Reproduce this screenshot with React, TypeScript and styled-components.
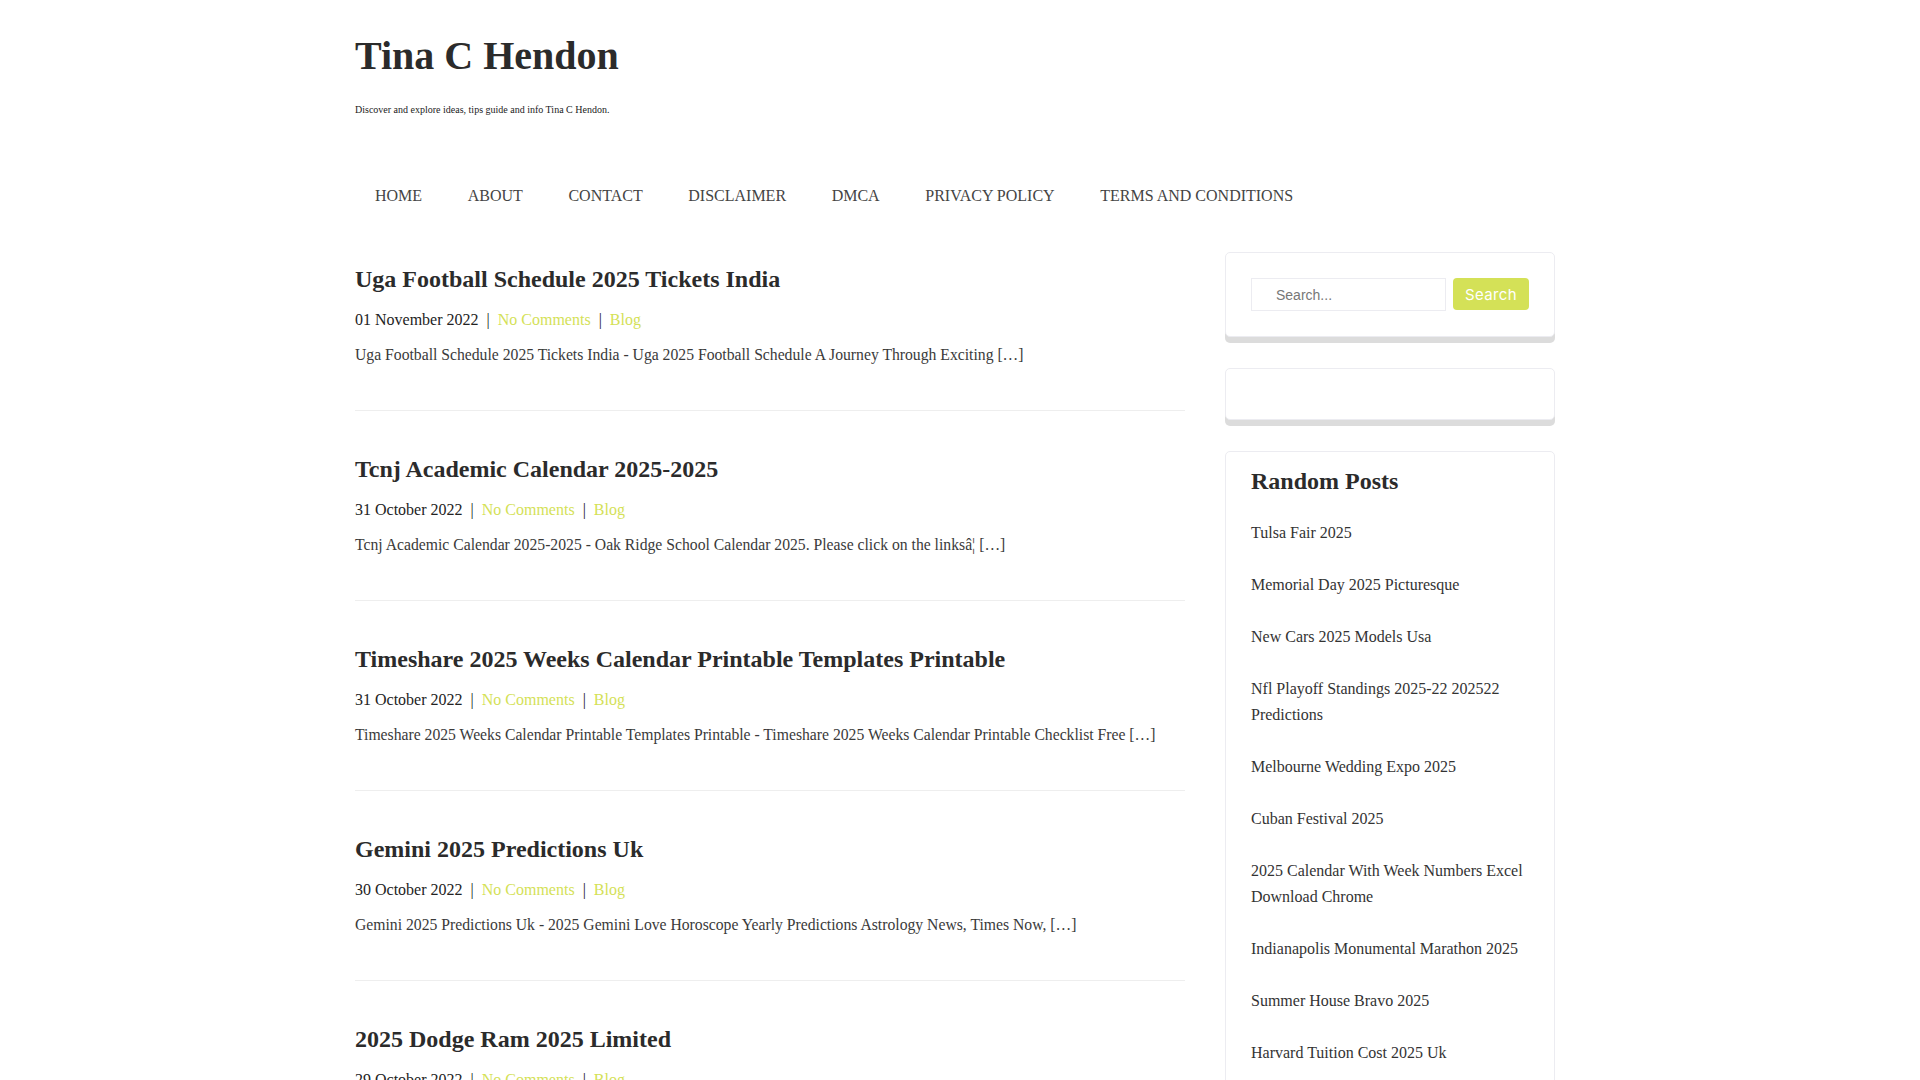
import styled, { createGlobalStyle } from "styled-components";

const GlobalStyle = createGlobalStyle`
  body {
    margin: 0;
    padding-right: 10px;
    background: #fff;
    font-family: "Liberation Serif", "Times New Roman", serif;
    color: #333;
  }
  a {
    text-decoration: none;
    color: inherit;
  }
`;

const Container = styled.div`
  width: 1200px;
  margin: 0 auto;
`;

const Header = styled.header`
  padding-top: 32px;
`;

const SiteTitle = styled.h1`
  margin: 0;
  font-size: 40px;
  line-height: 48px;
  font-weight: 700;
  color: #2b2b2b;
`;

const Tagline = styled.p`
  margin: 23px 0 0;
  font-size: 10px;
  line-height: 14px;
  color: #222;
`;

const Nav = styled.nav`
  margin-top: 54px;
  display: flex;
  gap: 5.6px;
`;

const NavItem = styled.a`
  padding: 0 20px;
  font-size: 16px;
  line-height: 50px;
  color: #444;
`;

const Content = styled.div`
  margin-top: 31px;
  display: grid;
  grid-template-columns: 830px 330px;
  column-gap: 40px;
  align-items: start;
`;

const Article = styled.article`
  padding: 43px 0 42px;
  border-bottom: 1px solid #eee;
  &:first-child {
    padding-top: 12px;
  }
`;

const PostTitle = styled.h2`
  margin: 0;
  font-size: 24px;
  line-height: 30px;
  font-weight: 700;
  color: #2b2b2b;
`;

const Meta = styled.div`
  margin-top: 13px;
  font-size: 16px;
  line-height: 26px;
  color: #222;
`;

const Sep = styled.span`
  margin: 0 8px;
`;

const MetaLink = styled.a`
  color: #d4e157;
`;

const Excerpt = styled.p`
  margin: 9px 0 0;
  font-size: 15.7px;
  line-height: 26px;
  color: #3a3a3a;
`;

const Widget = styled.div<{ $top?: number }>`
  border: 1px solid #ececf1;
  border-radius: 5px;
  background: #fff;
  box-shadow: 0 6px 0 #dcdcdc;
  padding: ${(p) => p.$top ?? 25}px 25px 25px;
  margin-bottom: 31px;
`;

const SearchForm = styled.form`
  display: flex;
  gap: 7px;
  align-items: flex-start;
`;

const SearchInput = styled.input`
  box-sizing: border-box;
  width: 195px;
  height: 33px;
  border: 1px solid #ececf1;
  padding: 0 0 0 24px;
  font-family: "Liberation Sans", Arial, sans-serif;
  font-size: 14px;
  color: #333;
  outline: none;
  &::placeholder {
    color: #777;
  }
`;

const SearchButton = styled.button`
  width: 76px;
  height: 32px;
  border: none;
  border-radius: 4px;
  background: #d4e157;
  color: #fff;
  font-family: Inter, "Liberation Sans", sans-serif;
  font-size: 15px;
  letter-spacing: 0.4px;
  cursor: pointer;
`;

const WidgetTitle = styled.h3`
  margin: 0 0 12px;
  font-size: 24px;
  line-height: 28px;
  font-weight: 700;
  color: #2b2b2b;
`;

const PostList = styled.ul`
  list-style: none;
  margin: 0;
  padding: 0;
`;

const PostItem = styled.li`
  padding: 13px 0;
  font-size: 16px;
  line-height: 26px;
  color: #333;
`;

const posts = [
  {
    title: "Uga Football Schedule 2025 Tickets India",
    date: "01 November 2022",
    excerpt:
      "Uga Football Schedule 2025 Tickets India - Uga 2025 Football Schedule A Journey Through Exciting […]",
  },
  {
    title: "Tcnj Academic Calendar 2025-2025",
    date: "31 October 2022",
    excerpt:
      "Tcnj Academic Calendar 2025-2025 - Oak Ridge School Calendar 2025. Please click on the linksâ¦ […]",
  },
  {
    title: "Timeshare 2025 Weeks Calendar Printable Templates Printable",
    date: "31 October 2022",
    excerpt:
      "Timeshare 2025 Weeks Calendar Printable Templates Printable - Timeshare 2025 Weeks Calendar Printable Checklist Free […]",
  },
  {
    title: "Gemini 2025 Predictions Uk",
    date: "30 October 2022",
    excerpt:
      "Gemini 2025 Predictions Uk - 2025 Gemini Love Horoscope Yearly Predictions Astrology News, Times Now, […]",
  },
  {
    title: "2025 Dodge Ram 2025 Limited",
    date: "29 October 2022",
    excerpt:
      "2025 Dodge Ram 2025 Limited - 2025 Ram 1500 Limited Specs, Price And Photos […]",
  },
];

const randomPosts = [
  "Tulsa Fair 2025",
  "Memorial Day 2025 Picturesque",
  "New Cars 2025 Models Usa",
  "Nfl Playoff Standings 2025-22 202522 Predictions",
  "Melbourne Wedding Expo 2025",
  "Cuban Festival 2025",
  "2025 Calendar With Week Numbers Excel Download Chrome",
  "Indianapolis Monumental Marathon 2025",
  "Summer House Bravo 2025",
  "Harvard Tuition Cost 2025 Uk",
  "Beach Volleyball 2025 Schedule",
];

const navItems = [
  "HOME",
  "ABOUT",
  "CONTACT",
  "DISCLAIMER",
  "DMCA",
  "PRIVACY POLICY",
  "TERMS AND CONDITIONS",
];

const App = () => {
  return (
    <>
      <GlobalStyle />
      <Container>
        <Header>
          <SiteTitle>Tina C Hendon</SiteTitle>
          <Tagline>Discover and explore ideas, tips guide and info Tina C Hendon.</Tagline>
          <Nav>
            {navItems.map((item) => (
              <NavItem key={item} href="#">
                {item}
              </NavItem>
            ))}
          </Nav>
        </Header>

        <Content>
          <main>
            {posts.map((post) => (
              <Article key={post.title}>
                <PostTitle>
                  <a href="#">{post.title}</a>
                </PostTitle>
                <Meta>
                  {post.date}
                  <Sep>|</Sep>
                  <MetaLink href="#">No Comments</MetaLink>
                  <Sep>|</Sep>
                  <MetaLink href="#">Blog</MetaLink>
                </Meta>
                <Excerpt>{post.excerpt}</Excerpt>
              </Article>
            ))}
          </main>

          <aside>
            <Widget>
              <SearchForm onSubmit={(e) => e.preventDefault()}>
                <SearchInput type="text" placeholder="Search..." />
                <SearchButton type="submit">Search</SearchButton>
              </SearchForm>
            </Widget>
            <Widget />
            <Widget $top={15}>
              <WidgetTitle>Random Posts</WidgetTitle>
              <PostList>
                {randomPosts.map((p) => (
                  <PostItem key={p}>
                    <a href="#">{p}</a>
                  </PostItem>
                ))}
              </PostList>
            </Widget>
          </aside>
        </Content>
      </Container>
    </>
  );
};

export default App;
